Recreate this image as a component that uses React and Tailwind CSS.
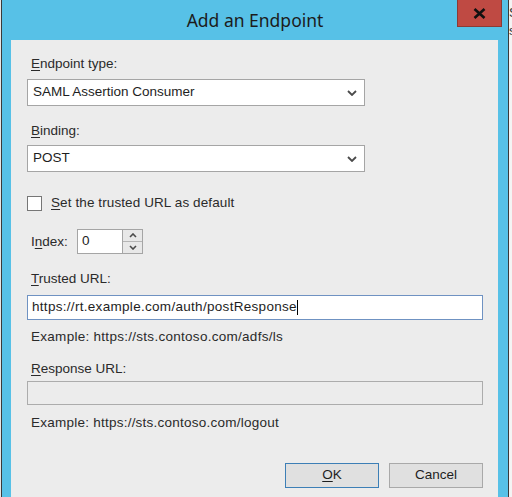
import React from 'react';

const font = { fontFamily: '"Liberation Sans", Arial, sans-serif' };

function Chevron() {
    return (
        <svg width="10" height="6" viewBox="0 0 10 6" className="shrink-0">
            <path d="M1 1 L5 5 L9 1" fill="none" stroke="#4a4a4a" strokeWidth="1.8" />
        </svg>
    );
}

function Select({ value }) {
    return (
        <div className="ml-[16px] w-[338px] h-[27px] bg-white border border-[#a5a5a5] flex items-center justify-between pl-[5px] pr-[7px] text-[13.5px] text-[#1e1e1e]">
            <span>{value}</span>
            <Chevron />
        </div>
    );
}

function Label({ children, className = '' }) {
    return (
        <div className={`ml-[20px] h-[16px] leading-[16px] text-[13.5px] text-[#2a2a2a] ${className}`}>
            {children}
        </div>
    );
}

export default function App() {
    return (
        <div className="w-[512px] h-[497px] overflow-hidden flex bg-white" style={font}>
            <div className="w-[1px] bg-[#e6e6e6]" />
            <div className="w-[1px] bg-[#3a3a3a]" />

            {/* dialog window */}
            <div className="w-[506px] bg-[#57c1e7] flex flex-col">
                {/* title bar */}
                <div className="h-[40px] relative flex items-center justify-center">
                    <span className="text-[17.5px] text-[#1c1c1c] mt-[1px]" style={{ fontFamily: '"Noto Sans", "Open Sans", sans-serif' }}>
                        Add an Endpoint
                    </span>
                    <div className="absolute top-0 right-[6px] w-[45px] h-[27px] bg-[#bf4a43] border border-[#8c3a35] border-t-0 flex items-center justify-center">
                        <svg width="13" height="11" viewBox="0 0 13 11">
                            <path d="M1.5 1 L11.5 10 M11.5 1 L1.5 10" stroke="#111" strokeWidth="2.6" />
                        </svg>
                    </div>
                </div>

                {/* client area */}
                <div className="ml-[9px] w-[487px] flex-1 bg-[#ececec] flex flex-col">
                    <Label className="mt-[16px]"><u className="underline-offset-2">E</u>ndpoint type:</Label>
                    <div className="mt-[7px]"><Select value="SAML Assertion Consumer" /></div>

                    <Label className="mt-[17px]"><u className="underline-offset-2">B</u>inding:</Label>
                    <div className="mt-[6px]"><Select value="POST" /></div>

                    <div className="mt-[23px] ml-[16px] h-[16px] flex items-center">
                        <div className="w-[15px] h-[15px] bg-white border border-[#767676]" />
                        <span className="ml-[9px] text-[13.5px] text-[#2a2a2a] leading-[16px] tracking-[0.1px]">
                            <u className="underline-offset-2">S</u>et the trusted URL as default
                        </span>
                    </div>

                    <div className="mt-[18px] ml-[20px] h-[25px] flex items-center">
                        <span className="text-[13.5px] text-[#2a2a2a] w-[46px] pt-[2px]">I<u className="underline-offset-2">n</u>dex:</span>
                        <div className="w-[46px] h-[25px] bg-white border border-[#a5a5a5] flex items-center pl-[4px] text-[13.5px] text-[#1e1e1e]">0</div>
                        <div className="w-[20px] h-[25px] flex flex-col border border-l-0 border-[#a5a5a5] bg-[#e8e8e8]">
                            <div className="flex-1 flex items-center justify-center border-b border-[#b5b5b5]">
                                <svg width="8" height="5" viewBox="0 0 8 5"><path d="M1 4 L4 1 L7 4" fill="none" stroke="#4a4a4a" strokeWidth="1.6" /></svg>
                            </div>
                            <div className="flex-1 flex items-center justify-center">
                                <svg width="8" height="5" viewBox="0 0 8 5"><path d="M1 1 L4 4 L7 1" fill="none" stroke="#4a4a4a" strokeWidth="1.6" /></svg>
                            </div>
                        </div>
                    </div>

                    <Label className="mt-[17px]"><u className="underline-offset-2">T</u>rusted URL:</Label>
                    <div className="mt-[8px] ml-[16px] w-[456px] h-[25px] bg-white border border-[#6f92c2] flex items-center pl-[4px] text-[13.5px] text-[#1e1e1e]">
                        <span className="tracking-[0.3px]">https://rt.example.com/auth/postResponse</span>
                        <span className="w-[1px] h-[15px] bg-black" />
                    </div>

                    <Label className="mt-[9px] tracking-[0.28px]">Example: https://sts.contoso.com/adfs/ls</Label>

                    <Label className="mt-[16px]"><u className="underline-offset-2">R</u>esponse URL:</Label>
                    <div className="mt-[4px] ml-[16px] w-[456px] h-[24px] bg-[#ececec] border border-[#acacac]" />

                    <Label className="mt-[10px] tracking-[0.24px]">Example: https://sts.contoso.com/logout</Label>

                    <div className="mt-[32px] flex justify-end gap-[10px] pr-[15px]">
                        <button className="w-[94px] h-[25px] bg-[#e0e0e0] border border-[#3d7fb6] text-[13.5px] text-[#1e1e1e]">
                            <u className="underline-offset-2">O</u>K
                        </button>
                        <button className="w-[94px] h-[25px] bg-[#e0e0e0] border border-[#a9a9a9] text-[13.5px] text-[#1e1e1e]">
                            Cancel
                        </button>
                    </div>
                </div>
            </div>

            <div className="w-[1px] bg-[#3a3a3a]" />
            <div className="w-[3px] bg-[#f4f4f4] overflow-hidden text-[13px] text-[#333] leading-[18px] pt-[4px]">
                <div>S</div>
                <div>s</div>
            </div>
        </div>
    );
}
